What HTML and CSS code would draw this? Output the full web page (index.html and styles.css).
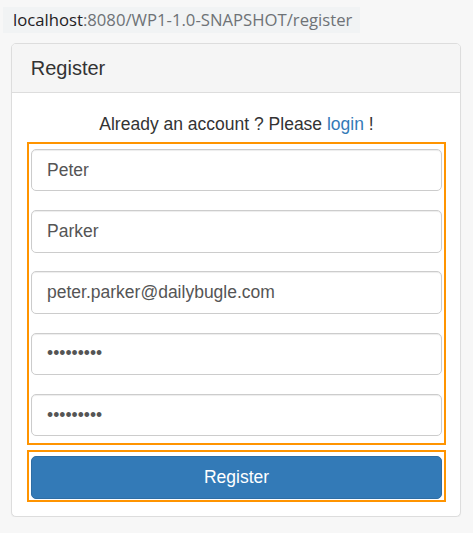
FILE: index.html
```html
<!DOCTYPE html>
<html>
<head>
<meta charset="utf-8">
<link rel="stylesheet" href="styles.css">
</head>
<body>
<div class="url"><span class="host">localhost</span>:8080/WP1-1.0-SNAPSHOT/register</div>
<div class="panel">
  <div class="panel-heading"><h3 class="panel-title">Register</h3></div>
  <div class="panel-body">
    <p class="already">Already an account ? Please <a href="#" class="link">login</a> !</p>
    <div class="frame fields">
      <input class="field" type="text" value="Peter">
      <input class="field" type="text" value="Parker">
      <input class="field" type="text" value="peter.parker@dailybugle.com">
      <input class="field" type="password" value="123456789">
      <input class="field" type="password" value="123456789">
    </div>
    <div class="frame action">
      <button class="btn" type="button">Register</button>
    </div>
  </div>
</div>
</body>
</html>
```
FILE: styles.css
```css
html, body {
  margin: 0;
  padding: 0;
}
body {
  background: #f7f7f7;
  font-family: "Liberation Sans", Arial, sans-serif;
  font-size: 17.5px;
  color: #333;
}
.url {
  margin: 7px 0 0 3px;
  width: 357px;
  height: 26px;
  box-sizing: border-box;
  padding-left: 10px;
  background: #f1f3f4;
  font-family: "Open Sans", sans-serif;
  font-size: 16.7px;
  line-height: 26px;
  color: #6e7276;
  white-space: nowrap;
}
.host {
  color: #1f2124;
}
.panel {
  margin: 10px 0 0 11px;
  width: 450px;
  box-sizing: border-box;
  background: #fff;
  border: 1px solid #ddd;
  border-radius: 5px;
  box-shadow: 0 1px 1px rgba(0,0,0,0.05);
  overflow: hidden;
}
.panel-heading {
  background: #f5f5f5;
  border-bottom: 1px solid #ddd;
  padding: 13px 18.75px;
}
.panel-title {
  margin: 0;
  font-size: 20px;
  line-height: 22px;
  font-weight: normal;
  color: #333;
}
.panel-body {
  padding: 18.75px 14px 14px 15px;
}
.already {
  margin: 0 0 5px;
  text-align: center;
  line-height: 25px;
}
.link {
  color: #337ab7;
  text-decoration: none;
}
.frame {
  border: 2px solid #ff9400;
  padding: 5px 2px 6.75px 2px;
  display: flex;
  flex-direction: column;
  gap: 18.75px;
}
.action {
  margin-top: 5px;
  padding: 4px 2px 1.5px 2px;
}
.field {
  display: block;
  width: 100%;
  height: 42.5px;
  box-sizing: border-box;
  margin: 0;
  padding: 7.5px 15px;
  border: 1px solid #ccc;
  border-radius: 5px;
  background: #fff;
  box-shadow: inset 0 1px 1px rgba(0,0,0,0.075);
  font-family: "Liberation Sans", Arial, sans-serif;
  font-size: 17.5px;
  color: #555;
  outline: none;
}
.btn {
  display: block;
  width: 100%;
  height: 42.5px;
  box-sizing: border-box;
  margin: 0;
  background: #337ab7;
  border: 1px solid #2e6da4;
  border-radius: 5px;
  color: #fff;
  font-family: "Liberation Sans", Arial, sans-serif;
  font-size: 17.5px;
  cursor: pointer;
}
```
